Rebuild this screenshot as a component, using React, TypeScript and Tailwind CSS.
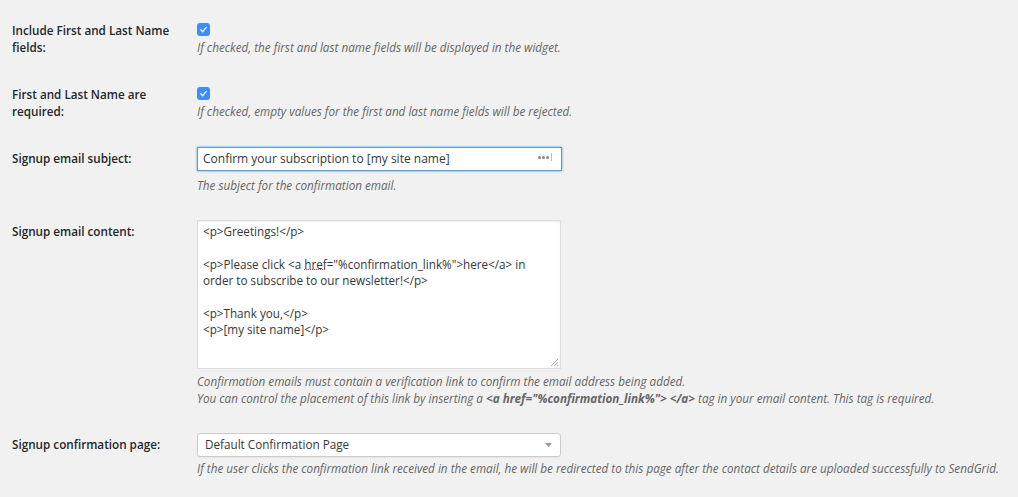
import React from 'react'

const font = { fontFamily: '"Open Sans", "Liberation Sans", sans-serif' }

function Check() {
  return (
    <div className="flex h-[13px] w-[13px] items-center justify-center rounded-[3px] bg-[#3b8ff6]">
      <svg width="9" height="9" viewBox="0 0 10 10" fill="none">
        <path d="M2 5.3 L4.1 7.4 L8 2.6" stroke="white" strokeWidth="1.5" strokeLinecap="round" strokeLinejoin="round" />
      </svg>
    </div>
  )
}

function Label({ children, className = '' }: { children: React.ReactNode; className?: string }) {
  return (
    <div className={`w-[185px] shrink-0 pr-2 text-[11.7px] font-semibold leading-[17px] text-[#23282d] ${className}`}>
      {children}
    </div>
  )
}

function Desc({ children, className = '' }: { children: React.ReactNode; className?: string }) {
  return <p className={`text-[11.7px] italic leading-[17px] text-[#666] ${className}`}>{children}</p>
}

export default function App() {
  return (
    <div className="min-h-[497px] w-[1018px] bg-[#f1f1f1] pl-3" style={font}>
      {/* first + last name */}
      <div className="flex pt-[22px]">
        <Label>Include First and Last Name fields:</Label>
        <div className="pt-[1px]">
          <Check />
          <Desc className="mt-[3px]">If checked, the first and last name fields will be displayed in the widget.</Desc>
        </div>
      </div>

      <div className="flex pt-[30px]">
        <Label>First and Last Name are required:</Label>
        <div className="pt-[1px]">
          <Check />
          <Desc className="mt-[3px]">If checked, empty values for the first and last name fields will be rejected.</Desc>
        </div>
      </div>

      {/* subject */}
      <div className="flex pt-[27px]">
        <Label className="pt-[3px]">Signup email subject:</Label>
        <div>
          <div className="relative flex h-[24px] w-[365px] items-center border border-[#5b9dd9] bg-white px-[5px] text-[12px] text-[#32373c] shadow-[0_0_2px_rgba(30,140,190,0.8)]">
            Confirm your subscription to [my site name]
            <div className="absolute right-[9px] top-[5px] flex items-center gap-[1px]">
              <span className="h-[3px] w-[3px] rounded-full bg-[#888]" />
              <span className="h-[3px] w-[3px] rounded-full bg-[#888]" />
              <span className="h-[3px] w-[3px] rounded-full bg-[#888]" />
              <span className="ml-[1px] h-[8px] w-[1px] bg-[#bbb]" />
            </div>
          </div>
          <Desc className="mt-[6px]">The subject for the confirmation email.</Desc>
        </div>
      </div>

      {/* content */}
      <div className="flex pt-[26px]">
        <Label className="pt-[3px]">Signup email content:</Label>
        <div>
          <div className="relative h-[149px] w-[364px] border border-[#ddd] bg-white px-[5px] pt-[2px] text-[11.7px] leading-[16.4px] text-[#32373c] shadow-[inset_0_1px_2px_rgba(0,0,0,0.07)]">
            <div>&lt;p&gt;Greetings!&lt;/p&gt;</div>
            <div className="h-[16.4px]" />
            <div>
              &lt;p&gt;Please click &lt;a href="%confirmation_link%"&gt;here&lt;/a&gt; in order to subscribe to our newsletter!&lt;/p&gt;
            </div>
            <div className="h-[16.4px]" />
            <div>&lt;p&gt;Thank you,&lt;/p&gt;</div>
            <div>&lt;p&gt;[my site name]&lt;/p&gt;</div>
            {/* spellcheck squiggle under "href" */}
            <div className="absolute left-[106px] top-[48px] w-[21px] border-b-[1.5px] border-dotted border-[#e33]" />
            <svg className="absolute bottom-[1px] right-[1px]" width="9" height="9" viewBox="0 0 9 9">
              <path d="M8 1 L1 8 M8 4 L4 8 M8 7 L7 8" stroke="#999" strokeWidth="0.8" />
            </svg>
          </div>
          <Desc className="mt-[4px]">
            Confirmation emails must contain a verification link to confirm the email address being added.
            <br />
            You can control the placement of this link by inserting a{' '}
            <b>&lt;a href="%confirmation_link%"&gt; &lt;/a&gt;</b> tag in your email content. This tag is required.
          </Desc>
        </div>
      </div>

      {/* confirmation page */}
      <div className="flex pt-[26px]">
        <Label className="pt-[3px]">Signup confirmation page:</Label>
        <div>
          <div className="flex h-[24px] w-[364px] items-center justify-between rounded-[3px] border border-[#ccc] bg-white pl-[7px] pr-[8px] text-[11.7px] text-[#32373c] shadow-[0_1px_1px_rgba(0,0,0,0.04)]">
            <span>Default Confirmation Page</span>
            <svg width="7" height="4" viewBox="0 0 7 4">
              <path d="M0 0 H7 L3.5 4 Z" fill="#999" />
            </svg>
          </div>
          <Desc className="mt-[3px]">
            If the user clicks the confirmation link received in the email, he will be redirected to this page after the contact details are uploaded successfully to SendGrid.
          </Desc>
        </div>
      </div>
    </div>
  )
}
